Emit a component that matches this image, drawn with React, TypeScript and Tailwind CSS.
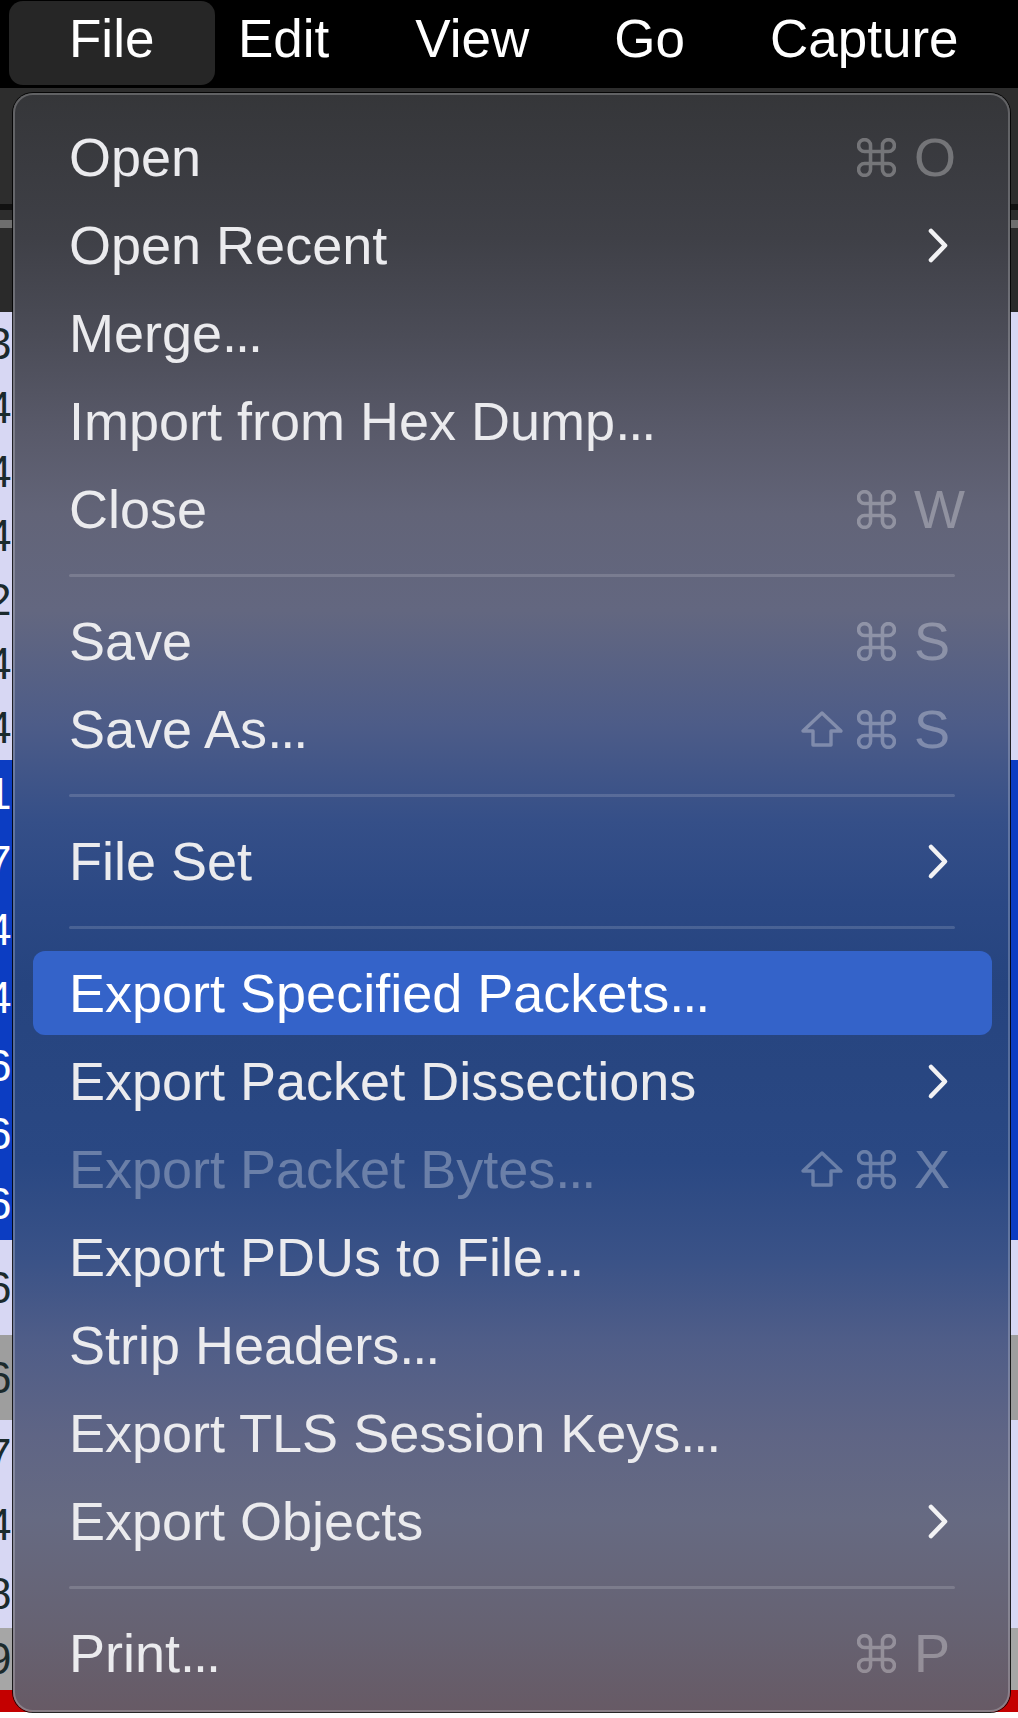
import React from "react";

type Shortcut = { shift?: boolean; key: string };
type Entry =
  | {
      kind: "item";
      label: string;
      shortcut?: Shortcut;
      submenu?: boolean;
      disabled?: boolean;
      highlighted?: boolean;
    }
  | { kind: "sep" };

const entries: Entry[] = [
  { kind: "item", label: "Open", shortcut: { key: "O" } },
  { kind: "item", label: "Open Recent", submenu: true },
  { kind: "item", label: "Merge..." },
  { kind: "item", label: "Import from Hex Dump..." },
  { kind: "item", label: "Close", shortcut: { key: "W" } },
  { kind: "sep" },
  { kind: "item", label: "Save", shortcut: { key: "S" } },
  { kind: "item", label: "Save As...", shortcut: { shift: true, key: "S" } },
  { kind: "sep" },
  { kind: "item", label: "File Set", submenu: true },
  { kind: "sep" },
  { kind: "item", label: "Export Specified Packets...", highlighted: true },
  { kind: "item", label: "Export Packet Dissections", submenu: true },
  {
    kind: "item",
    label: "Export Packet Bytes...",
    disabled: true,
    shortcut: { shift: true, key: "X" },
  },
  { kind: "item", label: "Export PDUs to File..." },
  { kind: "item", label: "Strip Headers..." },
  { kind: "item", label: "Export TLS Session Keys..." },
  { kind: "item", label: "Export Objects", submenu: true },
  { kind: "sep" },
  { kind: "item", label: "Print...", shortcut: { key: "P" } },
];

function CommandIcon() {
  return (
    <svg
      width="39"
      height="39"
      viewBox="2.2 2.2 19.6 19.6"
      fill="none"
      stroke="currentColor"
      strokeWidth="1.8"
      strokeLinecap="round"
      strokeLinejoin="round"
    >
      <path d="M15 6v12a3 3 0 1 0 3-3H6a3 3 0 1 0 3 3V6a3 3 0 1 0-3 3h12a3 3 0 1 0-3-3" />
    </svg>
  );
}

function ShiftIcon() {
  return (
    <svg
      width="44"
      height="38"
      viewBox="0 0 44 38"
      fill="none"
      stroke="currentColor"
      strokeWidth="3.4"
      strokeLinejoin="round"
    >
      <path d="M22 3 L41 21 H31 V35 H13 V21 H3 Z" />
    </svg>
  );
}

function Chevron() {
  return (
    <svg
      width="22"
      height="37"
      viewBox="0 0 22 37"
      fill="none"
      stroke="currentColor"
      strokeWidth="4.6"
      strokeLinecap="round"
      strokeLinejoin="round"
    >
      <polyline points="4,4 18,18.5 4,33" />
    </svg>
  );
}

function Label({ text }: { text: string }) {
  if (text.endsWith("...")) {
    return (
      <>
        {text.slice(0, -3)}
        <span className="tracking-[-2px]">...</span>
      </>
    );
  }
  return <>{text}</>;
}

function MenuRow({
  label,
  shortcut,
  submenu,
  disabled,
  highlighted,
}: {
  label: string;
  shortcut?: Shortcut;
  submenu?: boolean;
  disabled?: boolean;
  highlighted?: boolean;
}) {
  return (
    <div className="h-[88px] pl-[20px] pr-[18px] py-[2px]">
      <div
        className={
          highlighted
            ? "h-full rounded-[12px] bg-[#3463c9] flex items-center pl-[36px]"
            : "h-full rounded-[12px] flex items-center pl-[36px]"
        }
      >
        <div
          className={
            disabled
              ? "flex-1 text-white/30 whitespace-nowrap"
              : highlighted
              ? "flex-1 text-white whitespace-nowrap"
              : "flex-1 text-[#ebebee] whitespace-nowrap"
          }
        >
          <Label text={label} />
        </div>
        <div className="w-[165px] mr-[27px] h-full flex items-center">
          {shortcut && (
            <div className="flex items-center text-white/30">
              <div className="w-[57px] flex items-center">
                {shortcut.shift ? <ShiftIcon /> : null}
              </div>
              <div className="w-[57px] flex items-center">
                <CommandIcon />
              </div>
              <div className="w-[51px]">{shortcut.key}</div>
            </div>
          )}
          {submenu && (
            <div className="flex-1 flex justify-end pr-[16px] text-[#f2f2f4]">
              <Chevron />
            </div>
          )}
        </div>
      </div>
    </div>
  );
}

function Separator() {
  return (
    <div className="h-[44px] flex items-center pl-[56px] pr-[55px]">
      <div className="h-[3px] w-full bg-white/15 rounded-full" />
    </div>
  );
}

type Band = { h: number; cls: string; glyph?: string; glyphCls?: string };

const bands: Band[] = [
  { h: 116, cls: "bg-[#2d2d2d]" },
  { h: 6, cls: "bg-[#111111]" },
  { h: 10, cls: "bg-[#2d2d2d]" },
  { h: 8, cls: "bg-[#6e6e6e]" },
  { h: 84, cls: "bg-[#2a2a2a]" },
  { h: 64, cls: "bg-[#d7d7f3]", glyph: "3", glyphCls: "text-[#1b2a2c]" },
  { h: 64, cls: "bg-[#d7d7f3]", glyph: "4", glyphCls: "text-[#1b2a2c]" },
  { h: 64, cls: "bg-[#d7d7f3]", glyph: "4", glyphCls: "text-[#1b2a2c]" },
  { h: 64, cls: "bg-[#d7d7f3]", glyph: "4", glyphCls: "text-[#1b2a2c]" },
  { h: 64, cls: "bg-[#d7d7f3]", glyph: "2", glyphCls: "text-[#1b2a2c]" },
  { h: 64, cls: "bg-[#d7d7f3]", glyph: "4", glyphCls: "text-[#1b2a2c]" },
  { h: 64, cls: "bg-[#d7d7f3]", glyph: "4", glyphCls: "text-[#1b2a2c]" },
  { h: 68, cls: "bg-[#0c3dc2]", glyph: "1", glyphCls: "text-white" },
  { h: 68, cls: "bg-[#0c3dc2]", glyph: "7", glyphCls: "text-white" },
  { h: 68, cls: "bg-[#0c3dc2]", glyph: "4", glyphCls: "text-white" },
  { h: 68, cls: "bg-[#0c3dc2]", glyph: "4", glyphCls: "text-white" },
  { h: 68, cls: "bg-[#0c3dc2]", glyph: "6", glyphCls: "text-white" },
  { h: 68, cls: "bg-[#0c3dc2]", glyph: "6", glyphCls: "text-white" },
  { h: 72, cls: "bg-[#0c3dc2]", glyph: "6", glyphCls: "text-white" },
  { h: 95, cls: "bg-[#d7d7f3]", glyph: "6", glyphCls: "text-[#1b2a2c]" },
  { h: 85, cls: "bg-[#9e9e9e]", glyph: "6", glyphCls: "text-[#1b2a2c]" },
  { h: 70, cls: "bg-[#d7d7f3]", glyph: "7", glyphCls: "text-[#1b2a2c]" },
  { h: 70, cls: "bg-[#d7d7f3]", glyph: "4", glyphCls: "text-[#1b2a2c]" },
  { h: 68, cls: "bg-[#d7d7f3]", glyph: "8", glyphCls: "text-[#1b2a2c]" },
  { h: 62, cls: "bg-[#a6a6a6]", glyph: "9", glyphCls: "text-[#1b2a2c]" },
  { h: 22, cls: "bg-[#c40000]" },
];

export default function App() {
  return (
    <div className="relative w-[1018px] h-[1718px] overflow-hidden bg-white font-['Liberation_Sans',Arial,sans-serif]">
      {/* menu bar */}
      <div className="h-[88px] bg-black flex items-start text-white text-[53px] leading-none">
        <div className="ml-[9px] mt-[1px] w-[206px] h-[84px] rounded-[14px] bg-[#262626] pl-[60px] pt-[11px]">
          File
        </div>
        <div className="ml-[23px] pt-[12px]">Edit</div>
        <div className="ml-[86px] pt-[12px]">View</div>
        <div className="ml-[85px] pt-[12px]">Go</div>
        <div className="ml-[85px] pt-[12px]">Capture</div>
      </div>

      {/* application content behind the menu */}
      <div className="flex flex-col">
        {bands.map((b, i) => (
          <div
            key={i}
            className={`${b.cls} flex items-center overflow-hidden`}
            style={{ height: b.h }}
          >
            {b.glyph ? (
              <span className={`${b.glyphCls} -ml-[13px] text-[44px] leading-none`}>
                {b.glyph}
              </span>
            ) : null}
          </div>
        ))}
      </div>

      {/* dropdown menu */}
      <div className="absolute left-[13px] top-[93px] w-[997px] h-[1619px] rounded-[20px] overflow-hidden bg-[linear-gradient(180deg,#353639_0%,#3f4047_9%,#4b4c57_15%,#595a6a_21%,#626478_26%,#636780_32%,#4d5c88_39%,#354f88_45%,#2b4884_50%,#26447f_55%,#2a4883_66%,#3a5287_72%,#4f5d88_77%,#5f6585_83%,#666a82_88%,#666272_95%,#675a65_100%)] shadow-[inset_0_0_0_2px_rgba(255,255,255,0.22),0_0_0_1px_rgba(0,0,0,0.85)] pt-[20px] text-[54px] leading-none">
        {entries.map((e, i) =>
          e.kind === "sep" ? (
            <Separator key={i} />
          ) : (
            <MenuRow
              key={i}
              label={e.label}
              shortcut={e.shortcut}
              submenu={e.submenu}
              disabled={e.disabled}
              highlighted={e.highlighted}
            />
          )
        )}
      </div>
    </div>
  );
}
